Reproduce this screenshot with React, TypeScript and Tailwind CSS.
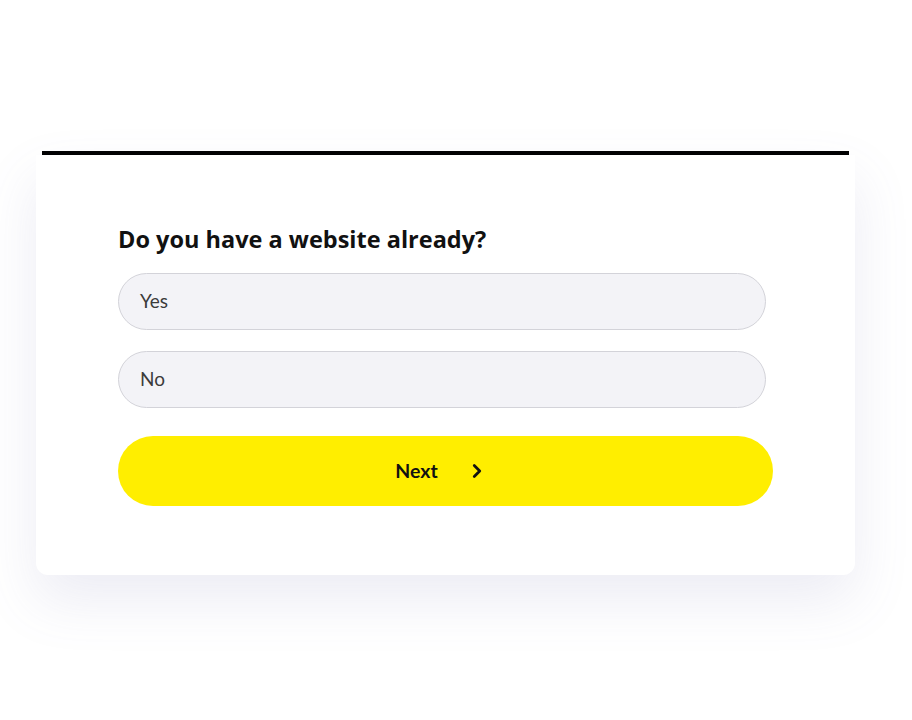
import { ChevronRight } from "lucide-react";

const options = ["Yes", "No"];

export default function App() {
  return (
    <div className="min-h-[720px] w-[912px] bg-white pl-[36px] pt-[151px] font-['Lato','Liberation_Sans',sans-serif]">
      <div className="flex w-[819px] flex-col">
        <div className="mx-[6px] h-[5px] bg-black" />
        <div className="-mt-px h-[420px] rounded-b-[12px] bg-white pl-[82px] pt-[69px] shadow-[0_25px_55px_rgba(110,110,170,0.13)]">
          <h1 className="font-['Open_Sans','Liberation_Sans',sans-serif] text-[23.5px] font-bold leading-[30px] text-[#111]">
            Do you have a website already?
          </h1>
          <div className="mt-[19px] flex flex-col gap-[21px]">
            {options.map((opt) => (
              <button
                key={opt}
                type="button"
                className="flex h-[57px] w-[648px] items-center rounded-full border border-[#d3d3d9] bg-[#f3f3f7] pl-[21px] text-left text-[19px] text-[#3b3b3b]"
              >
                {opt}
              </button>
            ))}
          </div>
          <button
            type="button"
            className="mt-[28px] flex h-[70px] w-[655px] items-center justify-center gap-[28px] rounded-full bg-[#ffee00] pr-[8px] text-[19.5px] font-bold text-[#111]"
          >
            <span>Next</span>
            <ChevronRight className="h-[22px] w-[22px]" strokeWidth={3} />
          </button>
        </div>
      </div>
    </div>
  );
}
